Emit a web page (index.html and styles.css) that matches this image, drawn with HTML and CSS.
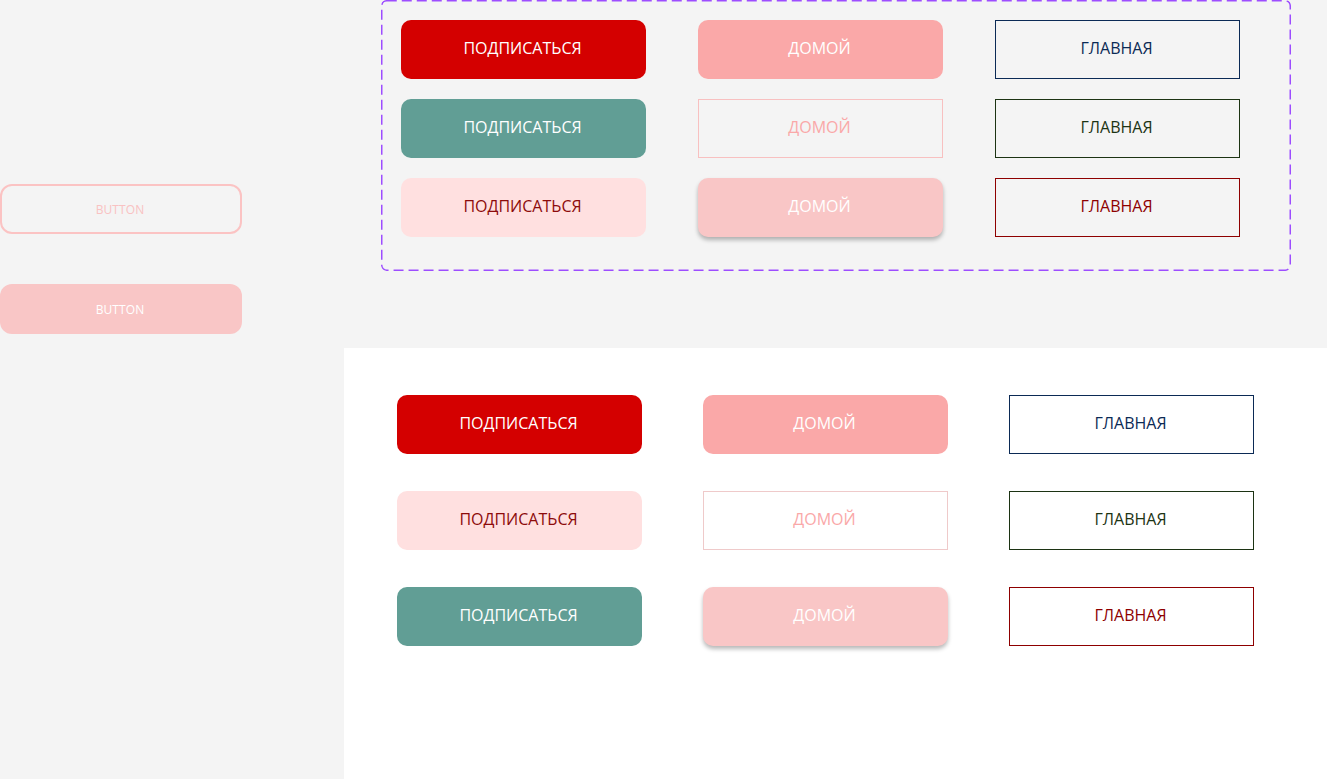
FILE: index.html
```html
<!DOCTYPE html>
<html lang="ru">
<head>
<meta charset="utf-8">
<title>Buttons</title>
<link rel="stylesheet" href="styles.css">
</head>
<body>
<div class="top">
  <div class="side">
    <button class="btn-small outline">Button</button>
    <button class="btn-small filled">Button</button>
  </div>
  <div class="dashed">
    <div class="grid grid-top">
      <button class="btn red">Подписаться</button>
      <button class="btn pink">Домой</button>
      <button class="btn box navy">Главная</button>
      <button class="btn teal">Подписаться</button>
      <button class="btn box pink-outline">Домой</button>
      <button class="btn box green">Главная</button>
      <button class="btn light">Подписаться</button>
      <button class="btn shadow">Домой</button>
      <button class="btn box maroon">Главная</button>
    </div>
  </div>
</div>
<div class="bottom">
  <div class="gutter"></div>
  <div class="panel">
    <div class="grid grid-bottom">
      <button class="btn red">Подписаться</button>
      <button class="btn pink">Домой</button>
      <button class="btn box navy">Главная</button>
      <button class="btn light">Подписаться</button>
      <button class="btn box pink-outline soft">Домой</button>
      <button class="btn box green">Главная</button>
      <button class="btn teal">Подписаться</button>
      <button class="btn shadow">Домой</button>
      <button class="btn box maroon">Главная</button>
    </div>
  </div>
</div>
</body>
</html>
```
FILE: styles.css
```css
* { box-sizing: border-box; }
html, body { margin: 0; padding: 0; }
body {
  background: #f4f4f4;
  font-family: "Open Sans", "Liberation Sans", sans-serif;
  width: 1327px;
  height: 779px;
  overflow: hidden;
}
button { font-family: inherit; cursor: pointer; }

.top {
  display: flex;
  height: 348px;
}
.side {
  width: 381px;
  padding-top: 184px;
  display: flex;
  flex-direction: column;
  gap: 50px;
}
.btn-small {
  width: 242px;
  height: 50px;
  border-radius: 12px;
  font-size: 12px;
  text-transform: uppercase;
  letter-spacing: 0.1px;
  padding: 1px 2px 0 0;
}
.btn-small.outline {
  background: transparent;
  border: 2px solid #fbc3c3;
  color: #f9c2c2;
}
.btn-small.filled {
  background: #f9c6c6;
  border: none;
  color: #ffffff;
}

.dashed {
  width: 910px;
  height: 271px;
  border-radius: 5px;
  padding: 20px 0 0 20px;
  background-image: url("data:image/svg+xml,%3Csvg xmlns='http://www.w3.org/2000/svg' width='910' height='271'%3E%3Crect x='0.75' y='0.75' width='908.5' height='269.5' rx='5' fill='none' stroke='%239d4dff' stroke-width='1.5' stroke-dasharray='10 5'/%3E%3C/svg%3E");
  background-repeat: no-repeat;
}

.grid {
  display: grid;
  grid-template-columns: repeat(3, 245px);
  grid-auto-rows: 59px;
}
.grid-top { column-gap: 52px; row-gap: 20px; }
.grid-bottom { column-gap: 61px; row-gap: 37px; }

.bottom {
  display: flex;
  height: 431px;
}
.gutter { width: 344px; }
.panel {
  flex: 1;
  background: #ffffff;
  padding: 47px 0 0 53px;
}

.btn {
  width: 245px;
  height: 59px;
  border: none;
  border-radius: 10px;
  font-size: 16px;
  text-transform: uppercase;
  padding: 0 2px 4px 0;
}
.btn.box {
  border-radius: 0;
  background: transparent;
  border: 1px solid;
}
.red { background: #d40000; color: #ffffff; }
.teal { background: #619e95; color: #ffffff; }
.pink { background: #faa8a8; color: #ffffff; }
.light { background: #ffe0e0; color: #8d0b0b; }
.shadow {
  background: #f9c6c6;
  color: #ffffff;
  box-shadow: 0 3px 4px rgba(0, 0, 0, 0.28);
}
.pink-outline { border-color: #f8c0c0 !important; color: #faa8a8; }
.pink-outline.soft { border-color: #efcaca !important; }
.navy { border-color: #0b2a55 !important; color: #0b2a55; }
.green { border-color: #1c3313 !important; color: #1c3313; }
.maroon { border-color: #8e0000 !important; color: #8e0000; }
```
